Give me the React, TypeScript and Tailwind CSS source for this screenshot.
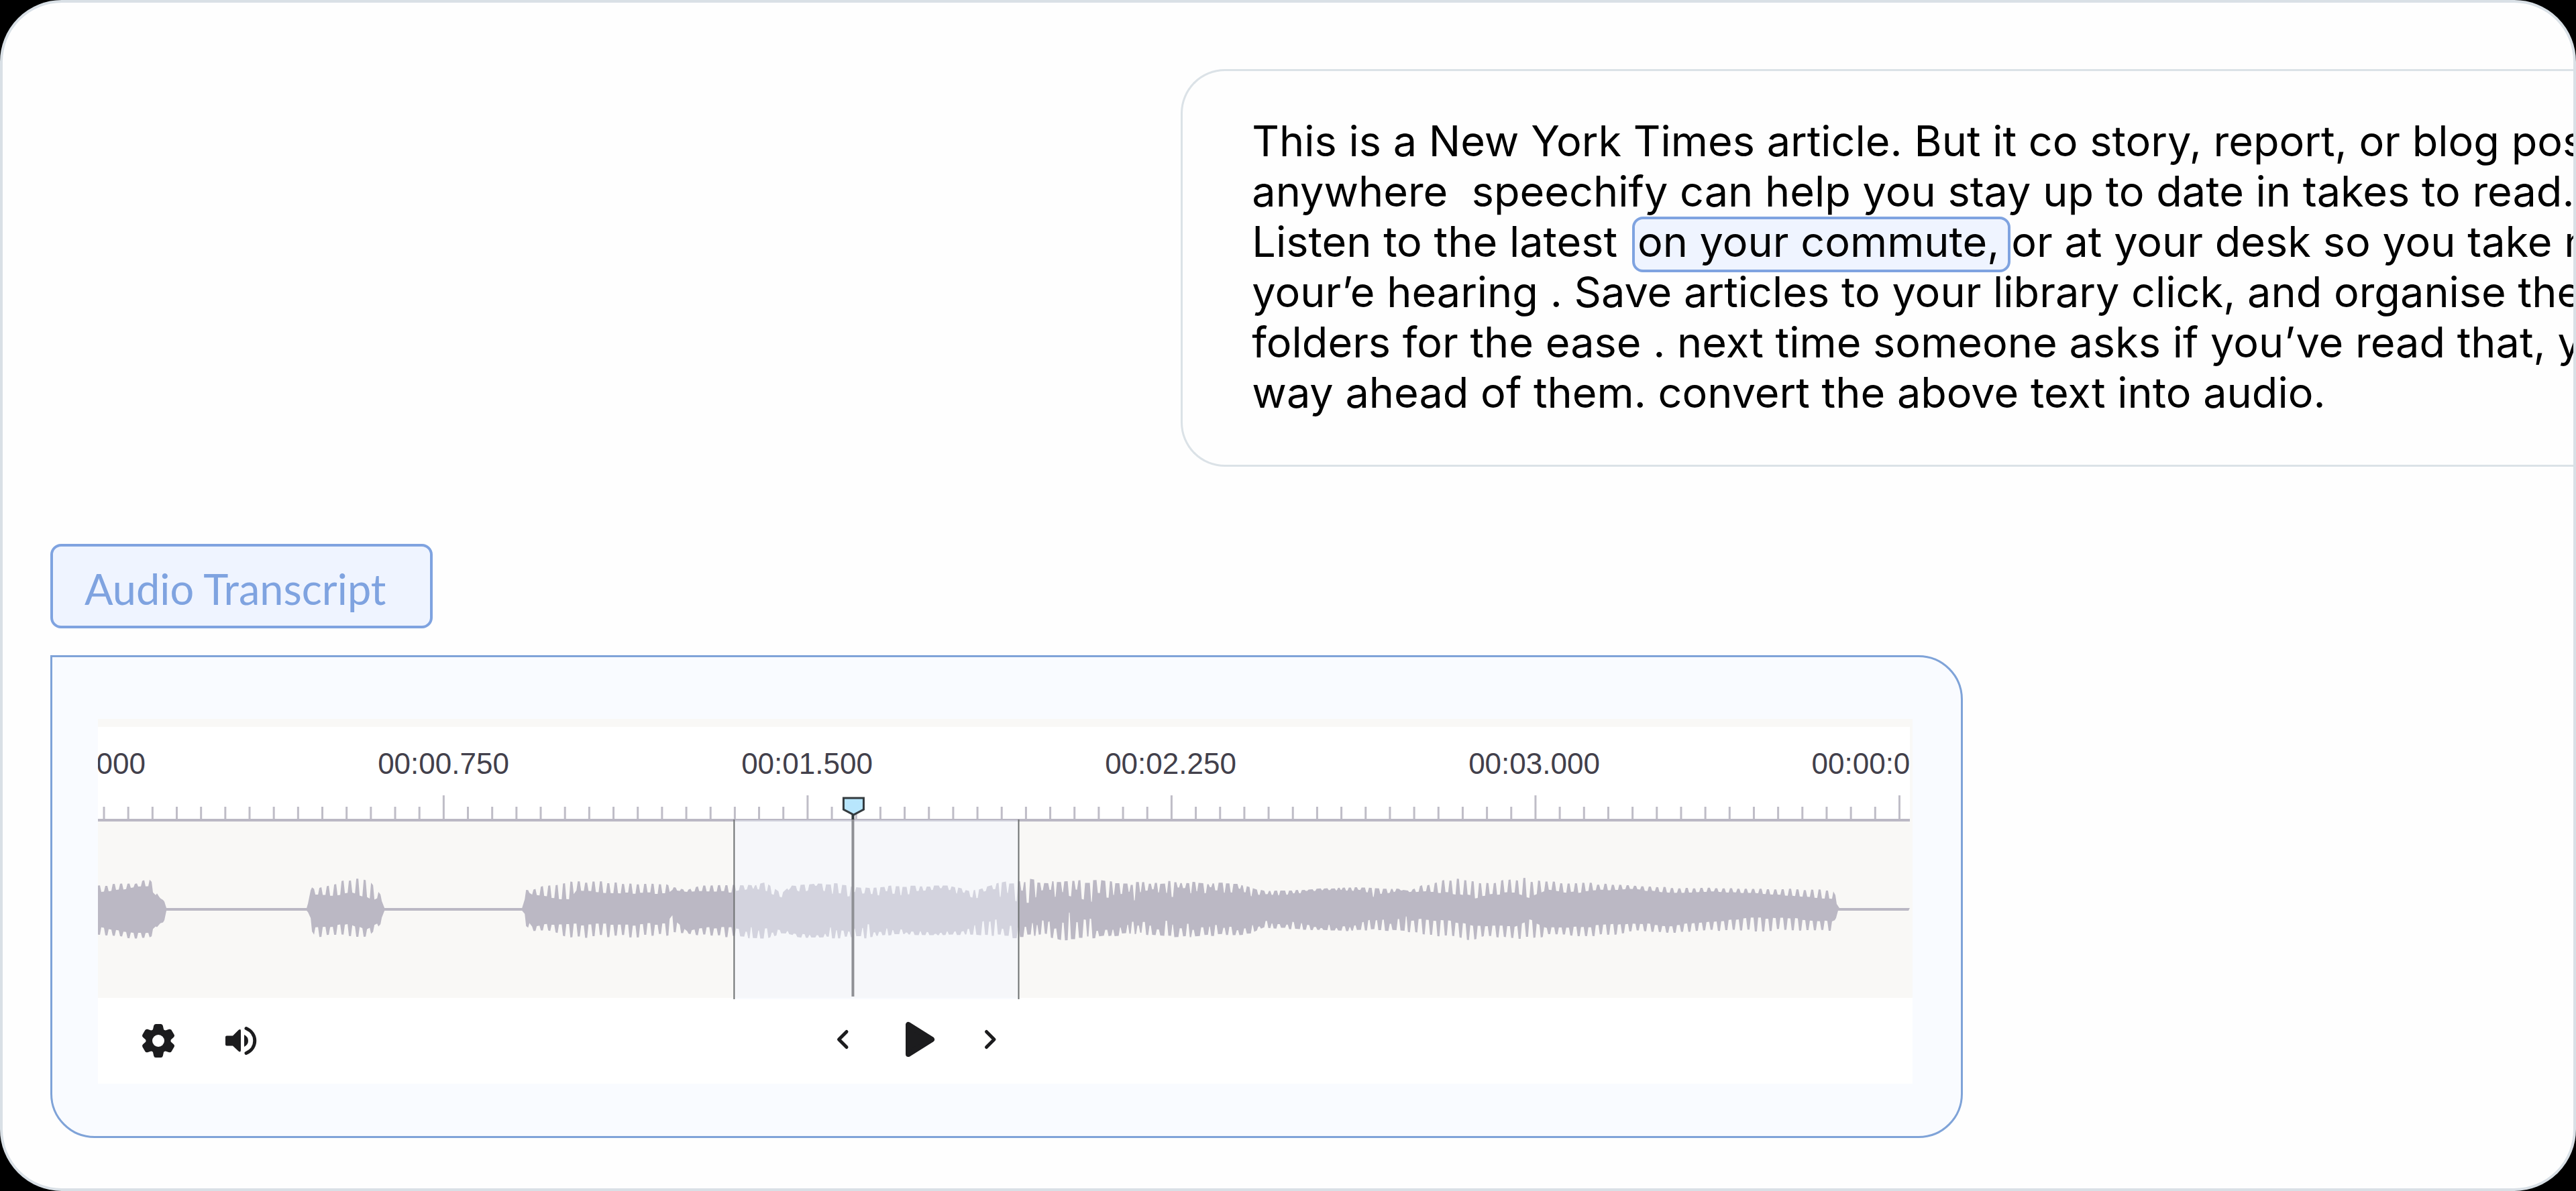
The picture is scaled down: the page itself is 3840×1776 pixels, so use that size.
import type { ReactNode } from "react";

// x, top peak, top valley, bottom valley, bottom peak (centre line is y = 134)
const ENVELOPE: number[][] = [
    [0, 99, 109, 160, 171], [37, 96, 105, 166, 175], [56, 95, 101, 168, 178], [76, 88, 101, 168, 177],
    [84, 96, 111, 160, 173], [89, 114, 115, 156, 158], [98, 119, 121, 153, 155], [102, 132, 132, 136, 136],
    [312, 132, 132, 136, 136], [316, 99, 105, 146, 164], [324, 105, 113, 161, 176], [353, 95, 113, 158, 173],
    [375, 89, 110, 153, 175], [398, 89, 118, 164, 176], [407, 96, 123, 160, 171], [421, 112, 115, 153, 156],
    [426, 132, 132, 136, 136], [634, 132, 132, 136, 136], [638, 105, 106, 146, 161], [646, 105, 113, 160, 166],
    [668, 97, 117, 156, 166], [703, 91, 120, 156, 177], [713, 93, 106, 156, 175], [783, 94, 111, 156, 175],
    [847, 96, 111, 155, 172], [856, 101, 105, 144, 170], [879, 105, 108, 167, 170], [898, 98, 107, 161, 173],
    [946, 96, 109, 160, 175], [978, 98, 102, 166, 177], [997, 94, 105, 165, 177], [1019, 110, 115, 166, 170],
    [1032, 98, 101, 168, 171], [1045, 98, 108, 170, 176], [1073, 95, 101, 171, 176], [1105, 96, 111, 160, 176],
    [1150, 102, 110, 161, 176], [1188, 99, 110, 165, 171], [1246, 99, 105, 169, 173], [1271, 99, 105, 168, 172],
    [1303, 107, 115, 161, 171], [1329, 98, 110, 151, 173], [1360, 92, 115, 153, 175], [1386, 90, 120, 153, 175],
    [1411, 93, 111, 155, 172], [1437, 93, 108, 148, 178], [1488, 91, 118, 155, 177], [1513, 95, 120, 158, 173],
    [1552, 95, 113, 156, 170], [1603, 93, 110, 158, 176], [1654, 95, 106, 160, 173], [1698, 95, 108, 161, 172],
    [1718, 101, 111, 160, 171], [1737, 107, 114, 154, 161], [1775, 106, 111, 154, 163], [1807, 104, 108, 158, 165],
    [1864, 101, 105, 160, 166], [1906, 103, 113, 149, 165], [1936, 103, 106, 147, 166], [1954, 106, 110, 150, 168],
    [1978, 97, 108, 148, 173], [2014, 89, 110, 150, 175], [2050, 91, 117, 158, 179], [2074, 95, 113, 158, 173],
    [2110, 89, 110, 158, 177], [2134, 89, 117, 148, 177], [2158, 93, 106, 160, 173], [2194, 94, 110, 160, 173],
    [2236, 96, 106, 158, 174], [2284, 98, 104, 154, 167], [2344, 102, 110, 158, 169], [2404, 102, 108, 152, 165],
    [2464, 103, 110, 145, 167], [2523, 104, 114, 147, 165], [2583, 106, 119, 152, 165], [2588, 108, 118, 150, 154],
    [2593, 132, 132, 136, 136], [2700, 132, 132, 136, 136],
];

function levels(x: number) {
    let i = 1;
    while (i < ENVELOPE.length - 1 && ENVELOPE[i][0] < x) i++;
    const a = ENVELOPE[i - 1];
    const b = ENVELOPE[i];
    const t = Math.min(1, Math.max(0, (x - a[0]) / (b[0] - a[0])));
    return a.map((v, k) => v + (b[k] - v) * t);
}

// small repeatable wobble so the spikes are not all alike
const noise = (n: number) => Math.abs(Math.sin(n * 12.9898) * 43758.5453) % 1;

function edge(peakCol: number, valleyCol: number, seed: number) {
    const pts: string[] = [];
    let x = 0;
    for (let n = seed; x < 2700; n++) {
        // the middle of the clip is irregular, the rest pulses evenly
        const uneven = x > 950 && x < 1950;
        const peakWidth = uneven ? 2 + Math.round(noise(n) * 5) : 3;
        const valleyWidth = uneven ? 1 + Math.round(noise(n + 3) * 2) : 4;
        const high = noise(n + 11) * 0.25 - 0.1;
        const low = uneven ? 0.5 + noise(n + 5) * 0.9 : 0.85 + noise(n + 5) * 0.2;
        const at = (px: number, mix: number) => {
            const l = levels(px);
            pts.push(`${Math.min(px, 2700)},${(l[peakCol] + (l[valleyCol] - l[peakCol]) * mix).toFixed(1)}`);
        };
        at(x, high);
        at(x + peakWidth, high);
        at(x + peakWidth + 2, low);
        at(x + peakWidth + 2 + valleyWidth, low);
        x += peakWidth + valleyWidth + 4;
    }
    return pts;
}

const WAVE = [...edge(1, 2, 0), ...edge(4, 3, 40).reverse()].join(" ");
const LABELS = ["00:00.000", "00:00.750", "00:01.500", "00:02.250", "00:03.000", "00:00:03.750"];
// 15 ticks for every label, each long one sits under a label
const TICKS = Array.from({ length: 75 }, (_, i) => ({ x: 9 + i * 36.155, major: i % 15 === 14 }));

function Timeline() {
    return (
        <svg viewBox="0 0 2700 302" preserveAspectRatio="none" className="relative block h-[302px] w-full overflow-visible" aria-label="Waveform" role="img">
            <rect width="2700" height="36" fill="#fff" />
            {TICKS.map((t) => (
                <rect key={t.x} x={t.x - 1.5} y={t.major ? 0 : 17} width="3" height={t.major ? 36 : 19} fill="#bfbdc7" />
            ))}
            <rect y="35" width="2700" height="4" fill="#bbb8c4" />
            <polygon points={WAVE} transform="translate(0 36)" fill="#bbb8c4" />
            <rect x="948" y="37" width="424" height="267" fill="#f1f7ff" opacity="0.44" />
            <path d="M948 36V304M1372 36V304" stroke="#6d7071" strokeWidth="2" />
            <path d="M1125 28V36" stroke="#333a3e" strokeWidth="4" />
            <path d="M1125 36V300" stroke="#8f9095" strokeWidth="4" />
            <path d="M1111 4H1141V21L1126 29L1111 21Z" fill="#b8e6fd" stroke="#333a3e" strokeWidth="3" />
        </svg>
    );
}

function GearIcon() {
    return (
        <svg viewBox="-26 -26 52 52" className="size-[52px]" fill="#1c1c1e">
            <circle r="18.5" />
            {[0, 60, 120, 180, 240, 300].map((a) => (
                <path key={a} transform={`rotate(${a})`} d="M-10 -14L-8 -17L-6.8 -22.5Q-6.2 -25 -3.8 -25H3.8Q6.2 -25 6.8 -22.5L8 -17L10 -14Z" />
            ))}
            <circle r="9" fill="#fff" />
        </svg>
    );
}

function SpeakerIcon() {
    return (
        <svg viewBox="0 0 48 48" className="size-12" fill="#1c1c1e">
            <path d="M3 16.5H12L20.5 8Q24 5.500 24 9V38Q24 42 20.500 39.500L12 31.500H3Q1 31.500 1 29.500V18.500Q1 16.500 3 16.500Z" />
            <path d="M29 15Q35 18 35 24T29 33Z" />
            <path d="M32 5.500C49 13 49 35 32 42.500" fill="none" stroke="#1c1c1e" strokeWidth="5" strokeLinecap="round" />
        </svg>
    );
}

function Chevron({ d }: { d: string }) {
    return (
        <svg viewBox="0 0 32 32" className="size-8" fill="none" stroke="#1c1c1e" strokeWidth="5" strokeLinecap="round" strokeLinejoin="round">
            <path d={d} />
        </svg>
    );
}

function IconButton({ label, children }: { label: string; children: ReactNode }) {
    return (
        <button type="button" aria-label={label} className="shrink-0 cursor-pointer">
            {children}
        </button>
    );
}

export default function App() {
    return (
        <div className="min-h-screen bg-black">
            <main className="flex min-h-screen flex-col overflow-hidden rounded-[92px] border-4 border-[#d9e0e6] bg-[#fefefe] pt-[99px] pb-[75px]">
                <section className="grid grid-cols-[11fr_13fr]">
                    <div className="col-start-2 min-w-0 overflow-hidden rounded-l-[66px] border-3 border-r-0 border-[#dbe2e7] pt-[67px] pb-[70px] pl-[103px]">
                        <p className="font-['Inter',sans-serif] text-[63px] leading-[75px] whitespace-pre text-black">
                            This is a New York Times article. But it co story, report, or blog post
                            <br />
                            {"anywhere  speechify can help you stay up to date in takes to read."}
                            <br />
                            {"Listen to the latest "}
                            <mark className="-mr-4 -mb-2 ml-1 inline-block rounded-2xl border-4 border-[#7fa3e0] bg-[#eff4ff] pr-3 pb-2 pl-1 leading-[67px] text-black">on your commute,</mark>
                            {" or at your desk so you take notes"}
                            <br />
                            your’e hearing . Save articles to your library click, and organise them
                            <br />
                            folders for the ease . next time someone asks if you’ve read that, you
                            <br />
                            way ahead of them. convert the above text into audio.
                        </p>
                    </div>
                </section>

                <section className="mt-[115px] px-[71px]">
                    <h2 className="flex h-[126px] w-[570px] items-center rounded-2xl border-4 border-[#7fa3e0] bg-[#eff4ff] px-[47px] pt-2 font-['Lato',sans-serif] text-[63px] leading-[72px] text-[#7fa3e0]">
                        Audio Transcript
                    </h2>

                    <div className="mt-10 w-full max-w-[2851px] rounded-[66px] rounded-tl-none border-3 border-[#7fa3d8] bg-[#f9fbff] pt-[92px] pr-[72px] pb-[78px] pl-[68px]">
                        <div className="bg-[#f9f8f6] pt-3">
                            <div className="mr-1">
                                <div className="overflow-hidden bg-white">
                                    <div className="-ml-[298px] flex h-[102px] items-center pt-2 font-['Liberation_Sans',Arial,sans-serif] text-[44px] leading-[60px] text-[#42404b]">
                                        {LABELS.map((label) => (
                                            <span key={label} className="w-[542px] shrink-0 text-center">{label}</span>
                                        ))}
                                    </div>
                                </div>
                                <Timeline />
                            </div>
                            <div className="grid h-32 grid-cols-[2fr_3fr] items-center bg-white">
                                <div className="flex items-center gap-[73px] pl-16">
                                    <IconButton label="Settings"><GearIcon /></IconButton>
                                    <IconButton label="Volume"><SpeakerIcon /></IconButton>
                                </div>
                                <div className="flex items-center gap-16 pb-1 pl-3">
                                    <IconButton label="Previous"><Chevron d="M22 4.500L10.500 16L22 27.500" /></IconButton>
                                    <IconButton label="Play">
                                        <svg viewBox="0 0 60 60" className="size-[60px]" fill="#1c1c1e" stroke="#1c1c1e" strokeWidth="8" strokeLinejoin="round">
                                            <path d="M18 8V52L53 30Z" />
                                        </svg>
                                    </IconButton>
                                    <IconButton label="Next"><Chevron d="M10.500 4.500L22 16L10.500 27.500" /></IconButton>
                                </div>
                            </div>
                        </div>
                    </div>
                </section>
            </main>
        </div>
    );
}
